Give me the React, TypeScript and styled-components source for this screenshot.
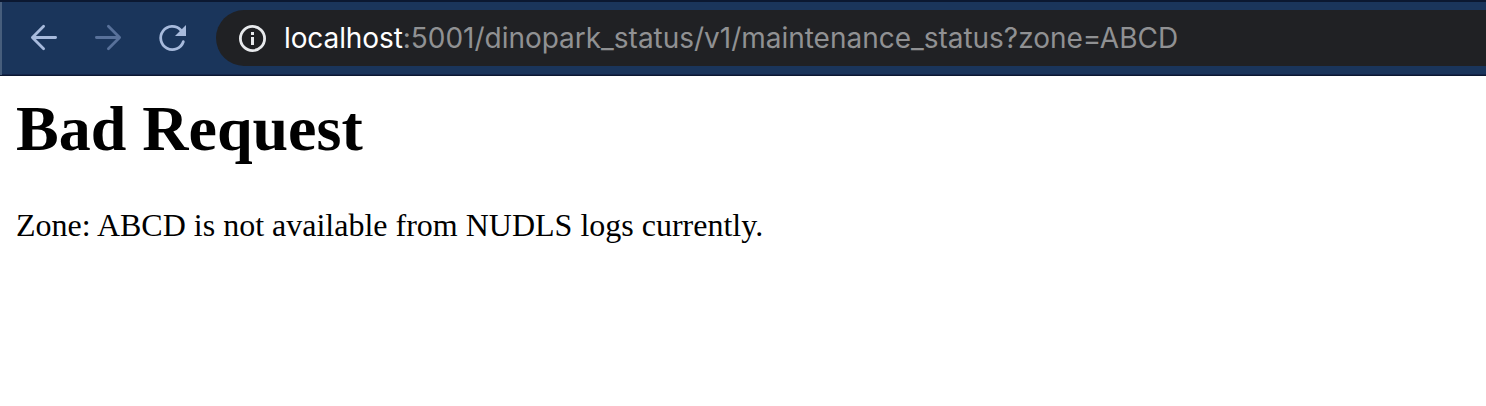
import React from "react";
import styled, { createGlobalStyle } from "styled-components";

const GlobalStyle = createGlobalStyle`
  body { margin: 0; background: #fff; }
`;

const Window = styled.div`
  min-height: 406px;
  background: #fff;
  overflow: hidden;
`;

const Toolbar = styled.header`
  box-sizing: border-box;
  display: flex;
  height: 76px;
  padding: 8px 0 8px 26px;
  background: #1a355b;
  border-top: 2px solid #0b1831;
  border-bottom: 1px solid #0b1831;
  box-shadow: inset 2px 0 #475e7c, inset 0 -1px #142449;
`;

const NavButtons = styled.nav`
  display: flex;
  gap: 28px;
  padding-top: 10px;
  width: 190px;
  box-sizing: border-box;
`;

const NavButton = styled.button<{ $dimmed?: boolean }>`
  flex: none;
  width: 36px;
  height: 36px;
  padding: 0;
  border: 0;
  background: none;
  color: ${(p) => (p.$dimmed ? "#58719a" : "#a7badc")};
  svg { display: block; }
`;

const AddressBar = styled.div`
  flex: 1;
  display: flex;
  align-items: center;
  height: 56px;
  padding-left: 20px;
  box-sizing: border-box;
  border-radius: 28px 0 0 28px;
  background: #202124;
  color: #e8eaed;
`;

const Url = styled.span`
  margin-left: 16px;
  padding-top: 1px;
  font: 400 28px/55px Inter, "Liberation Sans", sans-serif;
  letter-spacing: -0.02px;
  white-space: nowrap;
  color: #909193;
`;

const Host = styled.span`
  letter-spacing: -0.1px;
  color: #fff;
`;

const Page = styled.main`
  padding: 16px;
  font-family: "Liberation Serif", serif;
  color: #000;
`;

const Title = styled.h1`
  margin: 0;
  font-size: 64px;
  line-height: 74px;
`;

const Message = styled.p`
  margin: 41px 0 0;
  font-size: 32px;
  line-height: 36px;
`;

export default function App() {
  return (
    <Window>
      <GlobalStyle />
      <Toolbar>
        <NavButtons>
          <NavButton aria-label="Back">
            <svg width="36" height="36" viewBox="0 0 36 36" fill="none" stroke="currentColor" strokeWidth="2.8" strokeLinecap="round" strokeLinejoin="round">
              <path d="M29.6 17.5H6.5M17.6 6.3L6.4 17.5l11.2 11.2" />
            </svg>
          </NavButton>
          <NavButton $dimmed aria-label="Forward">
            <svg width="36" height="36" viewBox="0 0 36 36" fill="none" stroke="currentColor" strokeWidth="2.8" strokeLinecap="round" strokeLinejoin="round">
              <path d="M6.4 17.5h23.1M18.4 6.3l11.2 11.2-11.2 11.2" />
            </svg>
          </NavButton>
          <NavButton aria-label="Reload">
            <svg width="36" height="36" viewBox="0 0 36 36" fill="none">
              <path d="M29.3 21.7A11.6 11.6 0 1 1 26.7 10" stroke="currentColor" strokeWidth="2.8" strokeLinecap="round" />
              <path d="M32 5v11H21z" fill="currentColor" />
            </svg>
          </NavButton>
        </NavButtons>
        <AddressBar>
          <svg width="32" height="32" viewBox="0 0 32 32" fill="none">
            <circle cx="16.5" cy="16.5" r="12.1" stroke="currentColor" strokeWidth="2.8" />
            <path d="M15 10h3v3h-3zM15 15h3v8h-3z" fill="currentColor" />
          </svg>
          <Url>
            <Host>localhost</Host>:5001/dinopark_status/v1/maintenance_status?zone=ABCD
          </Url>
        </AddressBar>
      </Toolbar>
      <Page>
        <Title>Bad Request</Title>
        <Message>Zone: ABCD is not available from NUDLS logs currently.</Message>
      </Page>
    </Window>
  );
}
